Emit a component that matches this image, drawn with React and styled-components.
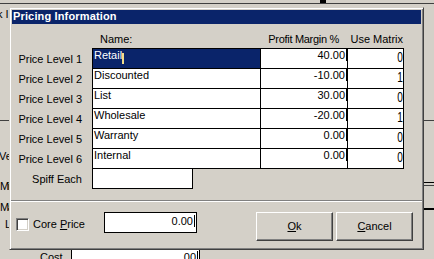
import React from "react";
import styled, { createGlobalStyle } from "styled-components";

const Global = createGlobalStyle`
  *, *::before, *::after { box-sizing: border-box; }
  html, body { margin: 0; padding: 0; }
  body {
    background: #d4d0c8;
    font-family: "Liberation Sans", Arial, sans-serif;
    font-size: 11px;
    color: #000;
  }
  #root { width: 434px; height: 259px; }
`;

const Screen = styled.div`
  position: relative;
  width: 434px;
  height: 259px;
  overflow: hidden;
  background: #d4d0c8;
`;

/* ---------- background window (partly hidden) ---------- */
const BgTop = styled.div`
  display: flex;
  height: 4px;
  border-bottom: 1px solid #404040;
`;
const BgTopMark = styled.div`
  margin-left: 320px;
  width: 6px;
  height: 3px;
  background: #000;
`;
const BgUpper = styled.div`
  height: 117px;
  padding-top: 4px;
  border-bottom: 1px solid #404040;
  line-height: 12px;
  white-space: pre;
`;
const BgClip = styled.span`
  display: inline-block;
  margin-left: -3px;
`;
const BgRow = styled.div`
  display: flex;
  align-items: flex-start;
  height: ${(p) => p.$h}px;
  padding-left: ${(p) => p.$indent || 0}px;
  line-height: 12px;
  white-space: nowrap;
`;
const BgLabel = styled.span`
  display: inline-block;
  width: ${(p) => (p.$w ? `${p.$w}px` : "auto")};
  margin-left: ${(p) => p.$shift || 0}px;
  padding-top: ${(p) => p.$top || 0}px;
  letter-spacing: ${(p) => p.$ls || 0}px;
`;
const BgSideBox = styled.div`
  margin-left: auto;
  margin-right: -10px;
  margin-top: 2px;
  width: 160px;
  height: 28px;
  border-top: 1px solid #000;
  border-bottom: 2px solid #000;
  box-shadow: inset 0 2px 0 #d4d0c8, inset 0 3px 0 #404040;
`;
const BgField = styled.div`
  display: flex;
  justify-content: flex-end;
  align-items: flex-start;
  width: 129px;
  height: 12px;
  padding: 2px 1px 0 0;
  background: #fff;
  border-left: 1px solid #000;
  border-right: 1px solid #000;
  line-height: 12px;
`;

/* ---------- dialog ---------- */
const Dialog = styled.div`
  position: absolute;
  left: 9px;
  top: 7px;
  width: 415px;
  height: 243px;
  display: flex;
  flex-direction: column;
  padding: 2px;
  background: #d4d0c8;
  border: 1px solid;
  border-color: #d4d0c8 #404040 #404040 #d4d0c8;
  box-shadow: inset 1px 1px 0 #fff, inset -1px -1px 0 #808080;
`;
const TitleBar = styled.div`
  height: 14px;
  padding-left: 1px;
  background: #0a246a;
  color: #fff;
  font-weight: bold;
  font-size: 11px;
  line-height: 12px;
  letter-spacing: 0.15px;
  white-space: nowrap;
`;
const Body = styled.div`
  display: flex;
  align-items: flex-start;
`;
const LabelCol = styled.div`
  display: flex;
  flex-direction: column;
  width: 80px;
  padding-top: 24px;
`;
const RowLabel = styled.div`
  height: 20px;
  padding: 5px 10px 0 0;
  text-align: right;
  line-height: 12px;
  white-space: nowrap;
`;
const TableCol = styled.div`
  display: flex;
  flex-direction: column;
  width: 312px;
`;
const HeaderRow = styled.div`
  display: flex;
  height: 24px;
  padding-top: 9px;
  line-height: 12px;
  white-space: nowrap;
`;
const HeaderCell = styled.div`
  width: ${(p) => p.$w}px;
  text-align: ${(p) => p.$align || "left"};
  padding-left: ${(p) => p.$pl || 0}px;
  padding-right: ${(p) => p.$pr || 0}px;
  letter-spacing: ${(p) => p.$ls || 0}px;
`;
const Table = styled.div`
  border-top: 1px solid #000;
  border-left: 1px solid #000;
`;
const TableRow = styled.div`
  display: grid;
  grid-template-columns: 168px 87px 56px;
`;
const Cell = styled.div`
  display: flex;
  align-items: flex-start;
  height: 20px;
  overflow: hidden;
  background: #fff;
  border-right: 1px solid #000;
  border-bottom: 1px solid #000;
  white-space: nowrap;
`;
const NameCell = styled(Cell)`
  padding-left: 1px;
  line-height: 13px;
  background: ${(p) => (p.$selected ? "#0a246a" : "#fff")};
  color: ${(p) => (p.$selected ? "#fff" : "#000")};
`;
const NumCell = styled(Cell)`
  justify-content: flex-end;
  line-height: 13px;
`;
const MatrixCell = styled(Cell)`
  justify-content: flex-end;
  font-size: 14px;
  line-height: 16px;
`;
const NarrowDigit = styled.span`
  display: inline-block;
  transform: scaleX(0.72);
  transform-origin: right center;
`;
const SelCaret = styled.span`
  display: inline-block;
  width: 2px;
  height: 11px;
  margin-top: 4px;
  background: #f2de8a;
`;
const Caret = styled.span`
  display: inline-block;
  width: 1px;
  height: 12px;
  margin-left: 1px;
  background: #000;
`;
const SpiffBox = styled.div`
  width: 101px;
  height: 20px;
  background: #fff;
  border: 1px solid #000;
  border-top: none;
`;
const Separator = styled.div`
  margin: 11px -1px 0;
  height: 2px;
  border-top: 1px solid #808080;
  border-bottom: 1px solid #fff;
`;
const Footer = styled.div`
  display: flex;
  align-items: flex-start;
  padding-top: 10px;
`;
const CoreGroup = styled.div`
  display: flex;
  align-items: flex-start;
  width: 92px;
`;
const CheckBox = styled.div`
  width: 13px;
  height: 13px;
  margin: 6px 0 0 4px;
  background: #fff;
  border: 1px solid;
  border-color: #808080 #fff #fff #808080;
  box-shadow: inset 1px 1px 0 #404040, inset -1px -1px 0 #d4d0c8;
`;
const CoreLabel = styled.span`
  margin: 6px 0 0 4px;
  line-height: 12px;
  white-space: nowrap;
`;
const CoreInput = styled.div`
  display: flex;
  justify-content: flex-end;
  align-items: flex-start;
  width: 93px;
  height: 21px;
  padding: 2px 1px 0 0;
  background: #fff;
  border: 1px solid #000;
  line-height: 12px;
`;
const Spacer = styled.div`
  flex: 1;
`;
const Buttons = styled.div`
  display: flex;
  gap: 3px;
  margin-right: 8px;
`;
const Button = styled.button`
  width: 77px;
  height: 29px;
  padding: 0;
  margin: 0;
  font-family: "Liberation Sans", Arial, sans-serif;
  font-size: 11px;
  line-height: 13px;
  color: #000;
  background: #d4d0c8;
  border: 1px solid;
  border-color: #fff #404040 #404040 #fff;
  box-shadow: inset -1px -1px 0 #808080, inset 1px 1px 0 #d4d0c8;
  cursor: default;
`;

const rows = [
  { label: "Price Level 1", name: "Retail", margin: "40.00", matrix: "0", selected: true },
  { label: "Price Level 2", name: "Discounted", margin: "-10.00", matrix: "1" },
  { label: "Price Level 3", name: "List", margin: "30.00", matrix: "0" },
  { label: "Price Level 4", name: "Wholesale", margin: "-20.00", matrix: "1" },
  { label: "Price Level 5", name: "Warranty", margin: "0.00", matrix: "0" },
  { label: "Price Level 6", name: "Internal", margin: "0.00", matrix: "0" },
];

export default function App() {
  return (
    <Screen>
      <Global />
      <BgTop>
        <BgTopMark />
      </BgTop>
      <BgUpper>
        <BgClip>k I</BgClip>
      </BgUpper>
      <BgRow $h={29} />
      <BgRow $h={30}>
        <BgLabel $shift={-1}>Ve</BgLabel>
      </BgRow>
      <BgRow $h={21}>
        <BgLabel $ls={-1.5}>Mi</BgLabel>
        <BgSideBox />
      </BgRow>
      <BgRow $h={17}>
        <BgLabel $ls={-1.5}>Ma</BgLabel>
      </BgRow>
      <BgRow $h={31} $indent={5}>
        <BgLabel>L</BgLabel>
      </BgRow>
      <BgRow $h={11} $indent={40}>
        <BgLabel $w={31} $top={2}>Cost</BgLabel>
        <BgField>
          .00
          <Caret />
        </BgField>
      </BgRow>

      <Dialog>
        <TitleBar>Pricing Information</TitleBar>
        <Body>
          <LabelCol>
            {rows.map((r) => (
              <RowLabel key={r.label}>{r.label}</RowLabel>
            ))}
            <RowLabel>Spiff Each</RowLabel>
          </LabelCol>
          <TableCol>
            <HeaderRow>
              <HeaderCell $w={169} $pl={8}>Name:</HeaderCell>
              <HeaderCell $w={87} $align="right" $pr={9} $ls={-0.3}>
                Profit Margin %
              </HeaderCell>
              <HeaderCell $w={56} $align="right" $pr={1}>Use Matrix</HeaderCell>
            </HeaderRow>
            <Table>
              {rows.map((r) => (
                <TableRow key={r.label}>
                  <NameCell $selected={r.selected}>
                    {r.name}
                    {r.selected && <SelCaret />}
                  </NameCell>
                  <NumCell>
                    {r.margin}
                    <Caret />
                  </NumCell>
                  <MatrixCell>
                    <NarrowDigit>{r.matrix}</NarrowDigit>
                  </MatrixCell>
                </TableRow>
              ))}
            </Table>
            <SpiffBox />
          </TableCol>
        </Body>
        <Separator />
        <Footer>
          <CoreGroup>
            <CheckBox />
            <CoreLabel>
              Core <u>P</u>rice
            </CoreLabel>
          </CoreGroup>
          <CoreInput>
            0.00
            <Caret />
          </CoreInput>
          <Spacer />
          <Buttons>
            <Button>
              <u>O</u>k
            </Button>
            <Button>
              <u>C</u>ancel
            </Button>
          </Buttons>
        </Footer>
      </Dialog>
    </Screen>
  );
}
